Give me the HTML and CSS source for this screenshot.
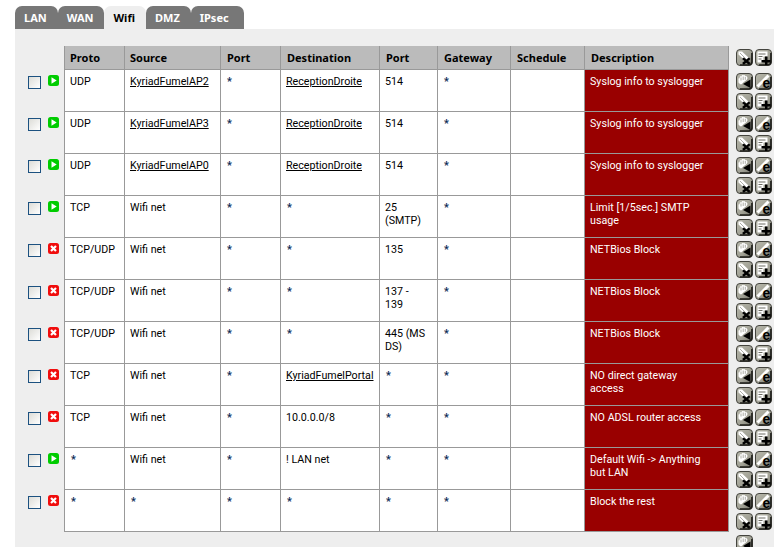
FILE: index.html
```html
<!DOCTYPE html>
<html lang="en">
<head>
<meta charset="utf-8">
<title>Firewall rules: Wifi</title>
<link rel="stylesheet" href="styles.css">
</head>
<body>
<svg class="defs" width="0" height="0" aria-hidden="true">
  <defs>
    <linearGradient id="metal" x1="0" y1="0" x2="1" y2="1">
      <stop offset="0" stop-color="#b8b8ac"/>
      <stop offset=".6" stop-color="#a0a094"/>
      <stop offset="1" stop-color="#6c6c64"/>
    </linearGradient>
    <symbol id="frame" viewBox="0 0 17 17">
      <rect x=".5" y=".5" width="16" height="16" rx="3.500" fill="url(#metal)" stroke="#44443e"/>
      <path d="M15.800 4v9q0 2.800-2.800 2.800H4" fill="none" stroke="#1c1c18" stroke-width="1.300"/>
    </symbol>
    <symbol id="hand" viewBox="0 0 17 17">
      <path d="M2.500 9.500V5.500l1-.3.500-2 1.500.3.500-1.500 1.500.3.800-.3 1.200 1 1.200.3.900 1.700-1 2-3 2.300-2 2H4.200z" fill="#fff"/>
      <path d="M5 4.500v3M7.200 3.500v3.500M9.300 3.800v3" stroke="#8a8a80" stroke-width=".7" fill="none"/>
    </symbol>
    <symbol id="i-move" viewBox="0 0 17 17">
      <use href="#frame"/>
      <use href="#hand"/>
      <path d="M14.500 6.500V15L7 11z" fill="#000"/>
    </symbol>
    <symbol id="i-edit" viewBox="0 0 17 17">
      <use href="#frame"/>
      <path d="M2.500 13.500L13.500 2.500" stroke="#fff" stroke-width="3" fill="none"/>
      <text x="7.500" y="14.500" class="icon-e">e</text>
    </symbol>
    <symbol id="i-del" viewBox="0 0 17 17">
      <use href="#frame"/>
      <path d="M2.500 2.500h3.500l7 6.500-4 2.500-6.500-6z" fill="#fff"/>
      <path d="M4 4l6 6" stroke="#8a8a80" stroke-width=".7"/>
      <path d="M7.800 8.500l2.500 2 2.500-2 1.700 1.600-2.400 2 2.400 2-1.700 1.600-2.500-2-2.500 2-1.700-1.600 2.400-2-2.400-2z" fill="#000"/>
    </symbol>
    <symbol id="i-add" viewBox="0 0 17 17">
      <use href="#frame"/>
      <path d="M2.500 2.500h10v5H8.500v6h-6z" fill="#fff"/>
      <path d="M3.500 5h7M3.500 7.500h4M3.500 10h3" stroke="#6c6c64" fill="none"/>
      <path d="M10 7.500h2.500V11H15.500v2.500h-3V16H10v-2.500H6.500V11H10z" fill="#000"/>
    </symbol>
    <symbol id="i-pass" viewBox="0 0 11 11">
      <rect width="11" height="11" rx="2.500" fill="#0c0"/>
      <path d="M3.500 2.200v6.600l5.200-3.300z" fill="#fff"/>
    </symbol>
    <symbol id="i-block" viewBox="0 0 11 11">
      <rect width="11" height="11" rx="2.500" fill="#f00d0d"/>
      <path d="M3 3l5 5M8 3l-5 5" stroke="#fff" stroke-width="2.200"/>
    </symbol>
  </defs>
</svg>

<nav class="tabs">
  <a class="tab">LAN</a>
  <a class="tab">WAN</a>
  <a class="tab active">Wifi</a>
  <a class="tab">DMZ</a>
  <a class="tab">IPsec</a>
</nav>

<main class="panel">
<table class="rules">
  <colgroup>
    <col class="c-check"><col class="c-state"><col class="c-proto"><col class="c-source"><col class="c-port"><col class="c-dest"><col class="c-dport"><col class="c-gw"><col class="c-sched"><col class="c-desc"><col class="c-act">
  </colgroup>
  <thead>
    <tr>
      <td></td><td></td>
      <th class="first">Proto</th><th>Source</th><th class="shift">Port</th><th class="shift">Destination</th><th class="shift">Port</th><th class="shift">Gateway</th><th class="shift">Schedule</th><th class="shift">Description</th>
      <td class="act"><div class="btns"><svg class="btn"><use href="#i-del"/></svg><svg class="btn"><use href="#i-add"/></svg></div></td>
    </tr>
  </thead>
  <tbody>
    <tr>
      <td class="chk"><input type="checkbox" class="box"></td><td class="st"><svg class="state"><use href="#i-pass"/></svg></td>
      <td class="first">UDP</td><td><a>KyriadFumelAP2</a></td><td class="any">*</td><td><a>ReceptionDroite</a></td><td>514</td><td class="any">*</td><td></td><td class="desc">Syslog info to syslogger</td>
      <td class="act"><div class="btns"><svg class="btn"><use href="#i-move"/></svg><svg class="btn"><use href="#i-edit"/></svg><svg class="btn"><use href="#i-del"/></svg><svg class="btn"><use href="#i-add"/></svg></div></td>
    </tr>
    <tr>
      <td class="chk"><input type="checkbox" class="box"></td><td class="st"><svg class="state"><use href="#i-pass"/></svg></td>
      <td class="first">UDP</td><td><a>KyriadFumelAP3</a></td><td class="any">*</td><td><a>ReceptionDroite</a></td><td>514</td><td class="any">*</td><td></td><td class="desc">Syslog info to syslogger</td>
      <td class="act"><div class="btns"><svg class="btn"><use href="#i-move"/></svg><svg class="btn"><use href="#i-edit"/></svg><svg class="btn"><use href="#i-del"/></svg><svg class="btn"><use href="#i-add"/></svg></div></td>
    </tr>
    <tr>
      <td class="chk"><input type="checkbox" class="box"></td><td class="st"><svg class="state"><use href="#i-pass"/></svg></td>
      <td class="first">UDP</td><td><a>KyriadFumelAP0</a></td><td class="any">*</td><td><a>ReceptionDroite</a></td><td>514</td><td class="any">*</td><td></td><td class="desc">Syslog info to syslogger</td>
      <td class="act"><div class="btns"><svg class="btn"><use href="#i-move"/></svg><svg class="btn"><use href="#i-edit"/></svg><svg class="btn"><use href="#i-del"/></svg><svg class="btn"><use href="#i-add"/></svg></div></td>
    </tr>
    <tr>
      <td class="chk"><input type="checkbox" class="box"></td><td class="st"><svg class="state"><use href="#i-pass"/></svg></td>
      <td class="first">TCP</td><td>Wifi net</td><td class="any">*</td><td class="any">*</td><td>25<br>(SMTP)</td><td class="any">*</td><td></td><td class="desc">Limit [1/5sec.] SMTP usage</td>
      <td class="act"><div class="btns"><svg class="btn"><use href="#i-move"/></svg><svg class="btn"><use href="#i-edit"/></svg><svg class="btn"><use href="#i-del"/></svg><svg class="btn"><use href="#i-add"/></svg></div></td>
    </tr>
    <tr>
      <td class="chk"><input type="checkbox" class="box"></td><td class="st"><svg class="state"><use href="#i-block"/></svg></td>
      <td class="first">TCP/UDP</td><td>Wifi net</td><td class="any">*</td><td class="any">*</td><td>135</td><td class="any">*</td><td></td><td class="desc">NETBios Block</td>
      <td class="act"><div class="btns"><svg class="btn"><use href="#i-move"/></svg><svg class="btn"><use href="#i-edit"/></svg><svg class="btn"><use href="#i-del"/></svg><svg class="btn"><use href="#i-add"/></svg></div></td>
    </tr>
    <tr>
      <td class="chk"><input type="checkbox" class="box"></td><td class="st"><svg class="state"><use href="#i-block"/></svg></td>
      <td class="first">TCP/UDP</td><td>Wifi net</td><td class="any">*</td><td class="any">*</td><td>137 -<br>139</td><td class="any">*</td><td></td><td class="desc">NETBios Block</td>
      <td class="act"><div class="btns"><svg class="btn"><use href="#i-move"/></svg><svg class="btn"><use href="#i-edit"/></svg><svg class="btn"><use href="#i-del"/></svg><svg class="btn"><use href="#i-add"/></svg></div></td>
    </tr>
    <tr>
      <td class="chk"><input type="checkbox" class="box"></td><td class="st"><svg class="state"><use href="#i-block"/></svg></td>
      <td class="first">TCP/UDP</td><td>Wifi net</td><td class="any">*</td><td class="any">*</td><td>445 (MS<br>DS)</td><td class="any">*</td><td></td><td class="desc">NETBios Block</td>
      <td class="act"><div class="btns"><svg class="btn"><use href="#i-move"/></svg><svg class="btn"><use href="#i-edit"/></svg><svg class="btn"><use href="#i-del"/></svg><svg class="btn"><use href="#i-add"/></svg></div></td>
    </tr>
    <tr>
      <td class="chk"><input type="checkbox" class="box"></td><td class="st"><svg class="state"><use href="#i-block"/></svg></td>
      <td class="first">TCP</td><td>Wifi net</td><td class="any">*</td><td><a>KyriadFumelPortal</a></td><td class="any">*</td><td class="any">*</td><td></td><td class="desc">NO direct gateway access</td>
      <td class="act"><div class="btns"><svg class="btn"><use href="#i-move"/></svg><svg class="btn"><use href="#i-edit"/></svg><svg class="btn"><use href="#i-del"/></svg><svg class="btn"><use href="#i-add"/></svg></div></td>
    </tr>
    <tr>
      <td class="chk"><input type="checkbox" class="box"></td><td class="st"><svg class="state"><use href="#i-block"/></svg></td>
      <td class="first">TCP</td><td>Wifi net</td><td class="any">*</td><td>10.0.0.0/8</td><td class="any">*</td><td class="any">*</td><td></td><td class="desc">NO ADSL router access</td>
      <td class="act"><div class="btns"><svg class="btn"><use href="#i-move"/></svg><svg class="btn"><use href="#i-edit"/></svg><svg class="btn"><use href="#i-del"/></svg><svg class="btn"><use href="#i-add"/></svg></div></td>
    </tr>
    <tr>
      <td class="chk"><input type="checkbox" class="box"></td><td class="st"><svg class="state"><use href="#i-pass"/></svg></td>
      <td class="first any">*</td><td>Wifi net</td><td class="any">*</td><td>! LAN net</td><td class="any">*</td><td class="any">*</td><td></td><td class="desc">Default Wifi -&gt; Anything but LAN</td>
      <td class="act"><div class="btns"><svg class="btn"><use href="#i-move"/></svg><svg class="btn"><use href="#i-edit"/></svg><svg class="btn"><use href="#i-del"/></svg><svg class="btn"><use href="#i-add"/></svg></div></td>
    </tr>
    <tr>
      <td class="chk"><input type="checkbox" class="box"></td><td class="st"><svg class="state"><use href="#i-block"/></svg></td>
      <td class="first any">*</td><td class="any">*</td><td class="any">*</td><td class="any">*</td><td class="any">*</td><td class="any">*</td><td></td><td class="desc">Block the rest</td>
      <td class="act"><div class="btns"><svg class="btn"><use href="#i-move"/></svg><svg class="btn"><use href="#i-edit"/></svg><svg class="btn"><use href="#i-del"/></svg><svg class="btn"><use href="#i-add"/></svg></div></td>
    </tr>
  </tbody>
  <tfoot>
    <tr>
      <td colspan="10"></td>
      <td class="act"><div class="btns"><svg class="btn"><use href="#i-move"/></svg></div></td>
    </tr>
  </tfoot>
</table>
</main>
</body>
</html>
```

FILE: styles.css
```css
html, body {
  margin: 0;
  height: 547px;
  overflow: hidden;
  background: #fff;
}
body {
  padding: 6px 0 0 15px;
  box-sizing: border-box;
  display: flex;
  flex-direction: column;
  font: 10.7px/13px Roboto, "Noto Sans", "Liberation Sans", sans-serif;
  color: #000;
}
.defs { position: absolute; }
.icon-e { font: bold 14px "Liberation Sans", sans-serif; fill: #000; }

.tabs { display: flex; height: 23px; flex: none; }
.tab {
  height: 23px;
  padding: 0 11px 0 9px;
  box-sizing: border-box;
  border-radius: 7px 7px 0 0;
  background: #777;
  color: #fff;
  font: 700 11px/24px "Noto Sans", sans-serif;
  text-decoration: none;
}
.tab:last-child { padding-right: 15px; }
.tab.active { background: #eee; color: #000; }

.panel { flex: 1; background: #eee; padding-top: 17px; }

.rules { border-collapse: separate; border-spacing: 0; table-layout: fixed; width: 759px; }
.c-check { width: 31px; }
.c-state { width: 18px; }
.c-proto { width: 61px; }
.c-source { width: 96px; }
.c-port { width: 60px; }
.c-dest { width: 99px; }
.c-dport { width: 58px; }
.c-gw { width: 73px; }
.c-sched { width: 74px; }
.c-desc { width: 144px; }
.c-act { width: 45px; }

.rules td, .rules th { padding: 0; vertical-align: top; text-align: left; }
.rules thead tr { height: 24px; }
.rules tbody tr { height: 42px; }

.rules th {
  background: #bbb;
  border-right: 1px solid #999;
  border-bottom: 1px solid #999;
  padding: 5px 5px 0;
  font: 700 11px/13px "Noto Sans", sans-serif;
}
.rules th.shift { padding-left: 6px; }
.rules tbody td {
  background: #fff;
  border-right: 1px solid #999;
  border-bottom: 1px solid #999;
  padding: 5px 5px 0;
}
.rules tbody td.any { padding-left: 6px; font-weight: 700; color: #0a2a55; }
.rules th.first, .rules tbody td.first { border-left: 1px solid #999; }
.rules tbody td.desc { background: #900; color: #fff; padding-right: 18px; }
a { color: #000; text-decoration: underline; }

.rules tbody td.chk, .rules tbody td.st, .rules tbody td.act { background: none; border: 0; }
.rules tbody td.chk { padding: 6px 0 0 13px; }
.box {
  appearance: none;
  display: block;
  margin: 0;
  width: 13px;
  height: 13px;
  border: 1px solid #1c5180;
  background: linear-gradient(135deg, #dcdcd7, #fff);
  box-sizing: border-box;
}
.rules tbody td.st { padding: 5px 0 0 2px; }
.state { display: block; width: 11px; height: 11px; }

.rules td.act, .rules tbody td.act { padding: 3px 0 0 7px; }
.btns { display: grid; grid-template-columns: 17px 17px; column-gap: 2px; row-gap: 3px; }
.btn { display: block; width: 17px; height: 17px; }
```
